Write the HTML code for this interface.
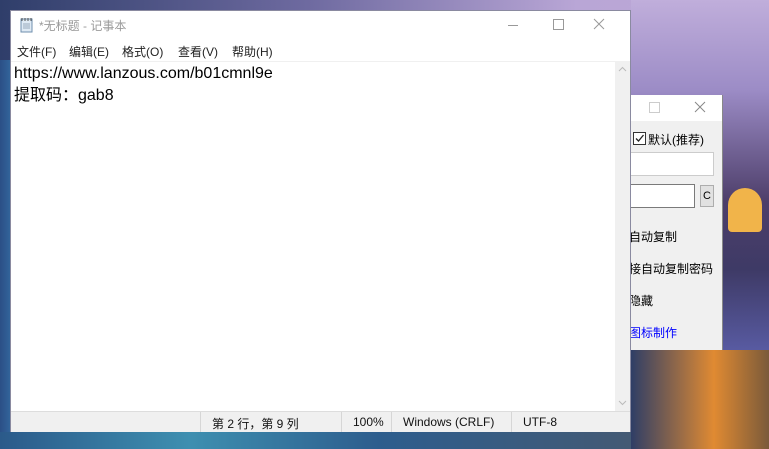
<!DOCTYPE html>
<html><head><meta charset="utf-8"><style>
*{margin:0;padding:0;box-sizing:border-box}
body{width:769px;height:449px;overflow:hidden;position:relative;font-family:"Liberation Sans","Noto Sans CJK SC",sans-serif;
background:linear-gradient(90deg,#2b4f86 0%,#3b7fb4 3%,#3a6fa5 40%,#46407a 75%,#6c5a92 100%);}
.bgtop{position:absolute;left:0;top:0;width:769px;height:60px;background:linear-gradient(90deg,#2f3e6a 0%,#6e6aa0 40%,#b9a6d6 75%,#bca8d8 100%)}
.bgright{position:absolute;left:631px;top:0;width:138px;height:449px;background:linear-gradient(180deg,#c0aedb 0%,#9c8cc6 20%,#4d3e6a 45%,#3e3a66 60%,#5b5ea8 80%,#4a3e58 100%)}
.lamp{position:absolute;left:728px;top:188px;width:34px;height:44px;border-radius:17px 17px 4px 4px;background:#f1b44a}
.door{position:absolute;left:631px;top:350px;width:138px;height:99px;background:linear-gradient(90deg,#2f3e66,#e08a32 60%,#7a5a3a)}
.bottom{position:absolute;left:0;top:432px;width:631px;height:17px;background:linear-gradient(90deg,#2b5a8a,#3e8fb0 30%,#2d5d8d 60%,#445a74)}
.np{position:absolute;left:10px;top:10px;width:621px;height:422px;background:#fff;border:1px solid #8a8aa0}
.title{position:absolute;left:0;top:0;width:619px;height:28px;font-size:12px;color:#9a9a9a}
.title span{position:absolute;left:28px;top:6px}
.menu{position:absolute;left:0;top:28px;height:22px;width:619px;font-size:12px;color:#222}
.menu span{position:absolute;top:4px}
.edit{position:absolute;left:0;top:50px;width:604px;height:350px;border-top:1px solid #f0f0f0;font-size:16px;line-height:22px;padding:1px 3px;color:#000}
.sb{position:absolute;left:604px;top:50px;width:15px;height:350px;background:#f0f0f0}
.status{position:absolute;left:0;top:400px;width:619px;height:21px;background:#f0f0f0;border-top:1px solid #ddd;font-size:12px;color:#111}
.status div{position:absolute;top:0;height:20px;border-left:1px solid #d6d6d6;padding:3px 0 0 11px}
.w2{position:absolute;left:631px;top:95px;width:92px;height:255px;background:#f0f0f0;border-right:1px solid #888;font-size:12px;color:#000}
.w2 .tb{height:26px;background:#fff}
</style></head><body>
<div class="bgtop"></div><div class="bgright"></div><div class="lamp"></div><div class="door"></div><div class="bottom"></div>
<div class="w2">
 <div class="tb"></div>
 <svg style="position:absolute;left:18px;top:6px" width="60" height="14"><rect x="0.5" y="1.5" width="10" height="10" fill="none" stroke="#ccc"/><path d="M46 1 L56 11 M56 1 L46 11" stroke="#888" stroke-width="1"/></svg>
 <div style="position:absolute;left:2px;top:37px;width:13px;height:13px;border:1px solid #333;background:#fff"><svg width="11" height="11" style="display:block"><path d="M2 5.5 L4.5 8 L9.5 2" stroke="#222" stroke-width="1.3" fill="none"/></svg></div>
 <span style="position:absolute;left:17px;top:36px">默认(推荐)</span>
 <div style="position:absolute;left:0;top:57px;width:83px;height:24px;background:#fff;border:1px solid #ccc;border-left:none"></div>
 <div style="position:absolute;left:0;top:89px;width:64px;height:24px;background:#fff;border:1px solid #7a7a7a;border-left:none"></div>
 <div style="position:absolute;left:69px;top:90px;width:14px;height:22px;background:#e1e1e1;border:1px solid #adadad;font-size:11px;text-align:center;line-height:20px">C</div>
 <span style="position:absolute;left:-2px;top:133px">自动复制</span>
 <span style="position:absolute;left:-2px;top:165px">接自动复制密码</span>
 <span style="position:absolute;left:-2px;top:197px">隐藏</span>
 <span style="position:absolute;left:-2px;top:229px;color:#0000ff">图标制作</span>
</div>
<div class="np">
 <div class="title">
  <svg style="position:absolute;left:8px;top:6px" width="16" height="16"><rect x="2" y="2" width="11" height="13" fill="#dfeaf4" stroke="#6f8fae"/><path d="M3 1v3M6 1v3M9 1v3M12 1v3" stroke="#555"/><path d="M4 7h7M4 9h7M4 11h7" stroke="#9ab"/></svg>
  <span>*无标题 - 记事本</span>
  <svg style="position:absolute;left:490px;top:6px" width="120" height="16"><path d="M7 8.5h10" stroke="#999"/><rect x="52.5" y="2.5" width="10" height="10" fill="none" stroke="#999"/><path d="M93 2 L103 12 M103 2 L93 12" stroke="#999"/></svg>
 </div>
 <div class="menu"><span style="left:6px">文件(F)</span><span style="left:58px">编辑(E)</span><span style="left:111px">格式(O)</span><span style="left:167px">查看(V)</span><span style="left:221px">帮助(H)</span></div>
 <div class="edit">https://www.lanzous.com/b01cmnl9e<br>提取码：gab8</div>
 <div class="sb"><svg width="15" height="350"><path d="M4 10 L7.5 6.5 L11 10" stroke="#bbb" fill="none"/><path d="M4 340 L7.5 343.5 L11 340" stroke="#bbb" fill="none"/></svg></div>
 <div class="status">
  <div style="left:189px;width:141px">第 2 行，第 9 列</div>
  <div style="left:330px;width:50px">100%</div>
  <div style="left:380px;width:114px">Windows (CRLF)</div>
  <div style="left:500px;width:119px">UTF-8</div>
 </div>
</div>
</body></html>
